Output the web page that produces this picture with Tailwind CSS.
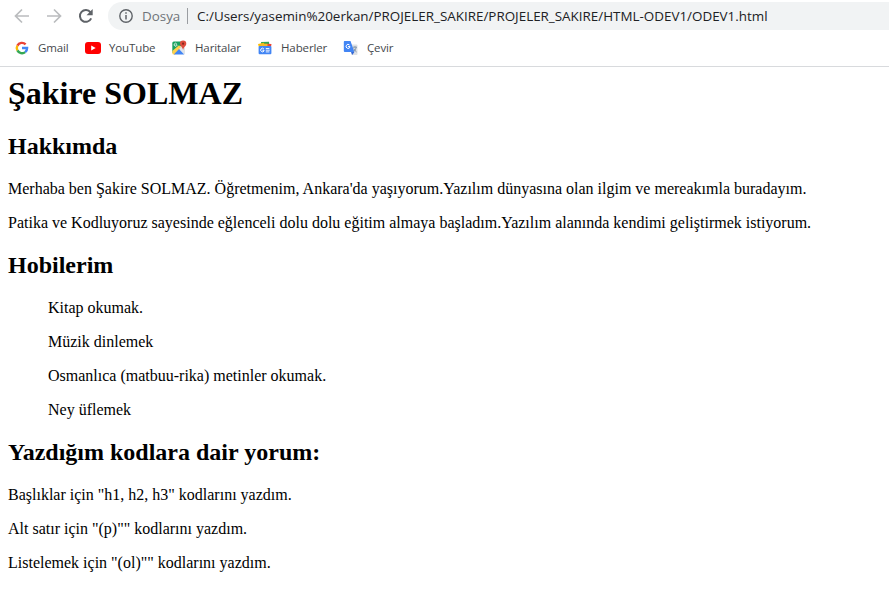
<!DOCTYPE html>
<html lang="tr">
<head>
<meta charset="utf-8">
<title>ODEV1</title>
<script src="https://cdn.jsdelivr.net/npm/@tailwindcss/browser@4"></script>
</head>
<body class="bg-white text-black h-[605px] overflow-hidden">
<header class="h-[67px] border-b border-[#d8dadd] font-['Open_Sans',sans-serif]">
  <nav class="flex h-[30px] pt-[2px]">
    <div class="flex w-[108px] shrink-0 items-center pl-[14px] gap-[16px]">
      <svg class="w-4 h-4 shrink-0" viewBox="0 0 16 16" fill="none" stroke="#babcbe" stroke-width="1.7"><path d="M15 8H2M8 1.5L1.5 8 8 14.5"/></svg>
      <svg class="w-4 h-4 shrink-0" viewBox="0 0 16 16" fill="none" stroke="#babcbe" stroke-width="1.7"><path d="M1 8h13M8 1.5L14.5 8 8 14.5"/></svg>
      <svg class="w-4 h-4 shrink-0" viewBox="0 0 16 16"><path d="M13.2 10.4A5.9 5.9 0 1 1 12.5 4.3" fill="none" stroke="#5f6368" stroke-width="2"/><path d="M14.7 1v6.2H8.5z" fill="#5f6368"/></svg>
    </div>
    <div class="flex flex-1 h-7 items-center rounded-l-full bg-[#f1f3f4] pl-[11px] whitespace-nowrap">
      <svg class="w-[14px] h-[14px] shrink-0" viewBox="0 0 14 14" fill="none" stroke="#5f6368"><circle cx="7" cy="7" r="6.2" stroke-width="1.4"/><path d="M7 6v4.5M7 3.3v1.5" stroke-width="1.5"/></svg>
      <span class="ml-[9px] w-[45px] text-[13.4px] leading-5 text-[#6f7378]">Dosya</span>
      <span class="w-px h-4 bg-[#9a9da1]"></span>
      <span class="ml-[9px] text-[13.42px] leading-5 text-[#202124]">C:/Users/yasemin%20erkan/PROJELER_SAKIRE/PROJELER_SAKIRE/HTML-ODEV1/ODEV1.html</span>
    </div>
  </nav>
  <div class="flex h-9 items-center pl-[14px] text-[11.5px] tracking-[-0.12px] leading-4 text-[#45484c] whitespace-nowrap">
    <a class="flex items-center w-[70px]">
      <svg class="w-4 h-4 mr-2 shrink-0" viewBox="0 0 16 16" fill="none" stroke-width="2.4"><path d="M3.4 5.6A5.1 5.1 0 0 1 11.6 4.4" stroke="#ea4335"/><path d="M3.4 5.6a5.1 5.1 0 0 0 0 4.8" stroke="#fbbc05"/><path d="M3.4 10.4a5.1 5.1 0 0 0 7.8 1.7" stroke="#34a853"/><path d="M8 8h5.1a5.1 5.1 0 0 1-1.9 4.1" stroke="#4285f4"/></svg>
      <span>Gmail</span>
    </a>
    <a class="flex items-center w-[87px]">
      <svg class="w-[17px] h-4 mr-2 shrink-0" viewBox="0 0 17 16"><rect x="1" y="2" width="16" height="12" rx="3" fill="#f00"/><path d="M7.2 5.4v5.2L11.7 8z" fill="#fff"/></svg>
      <span>YouTube</span>
    </a>
    <a class="flex items-center w-[86px]">
      <svg class="w-4 h-4 mr-2 shrink-0" viewBox="0 0 16 16"><path d="M1.3 3q0-1.5 1.5-1.5H11V5l-9.7 8z" fill="#18a15f"/><path d="M1.3 11L8 5.2 11 8l-7 6.5H2.8q-1.5 0-1.5-1.5z" fill="#ffd04b"/><path d="M8 9l3.3-3.5L14 8v5.5q0 1-1 1z" fill="#e0e4e8"/><path d="M2.8 14.5L8 9l5.2 5.5z" fill="#4285f4"/><path d="M5.6 3.6A1.5 1.5 0 1 0 6 5.3v-.5H4.7" fill="none" stroke="#fff" stroke-width=".8"/><path d="M12.1.5a3.2 3.2 0 0 0-3.2 3.2c0 2.3 2.6 3.2 3.2 6.2.6-3 3.2-3.9 3.2-6.2A3.2 3.2 0 0 0 12.1.5z" fill="#de4b3c"/><circle cx="12.1" cy="3.7" r="1.1" fill="#85251b"/></svg>
      <span>Haritalar</span>
    </a>
    <a class="flex items-center w-[86px]">
      <svg class="w-4 h-4 mr-2 shrink-0" viewBox="0 0 16 16"><path d="M4 2l8-.3.5 5h-8z" fill="#34a853"/><path d="M1 4l6-1.2 1 4H1.8z" fill="#fbbc05"/><path d="M8 3.8l6.5.2-.7 4H8z" fill="#ea4335"/><path d="M3.5 3.8h7v3h-7z" fill="#f2b928"/><rect x="1.6" y="6" width="12.8" height="8.3" rx="1" fill="#4285f4"/><path d="M6.8 8.8A1.8 1.8 0 1 0 7 11v-.8H5.4" fill="none" stroke="#fff" stroke-width="1"/><path d="M8.8 8.5h3.6M8.8 10.2h4M8.8 11.9h3.6" stroke="#fff" stroke-width=".9"/></svg>
      <span>Haberler</span>
    </a>
    <a class="flex items-center">
      <svg class="w-4 h-4 mr-2 shrink-0" viewBox="0 0 16 16"><path d="M7 4.5h6.5q1 0 1 1V14q0 1-1 1H8.5z" fill="#dfe1e4"/><path d="M8 12h3.4l-2.2 3z" fill="#3367d6"/><path d="M1.5 1h6l3.9 11H1.8Q.8 12 .8 11V2q0-1 .7-1z" fill="#4285f4"/><path d="M6.5 5A2 2 0 1 0 7 7v-.4H5" fill="none" stroke="#fff" stroke-width="1"/><path d="M10 7.2h4M12 6.2v1M13.2 7.5q-.6 2.5-2.4 4M10.8 8.5q1 2.3 2.8 3.5" fill="none" stroke="#7c8fa3" stroke-width=".9"/></svg>
      <span>Çevir</span>
    </a>
  </div>
</header>
<main class="pt-2 px-2 text-[16px] leading-[18px] font-['Liberation_Serif',serif]">
  <h1 class="text-[32px] leading-[37px] font-bold mb-[21px]">Şakire SOLMAZ</h1>
  <h2 class="text-[24px] leading-[27px] font-bold mb-5">Hakkımda</h2>
  <p class="mb-4">Merhaba ben Şakire SOLMAZ. Öğretmenim, Ankara'da yaşıyorum.Yazılım dünyasına olan ilgim ve mereakımla buradayım.</p>
  <p class="mb-5">Patika ve Kodluyoruz sayesinde eğlenceli dolu dolu eğitim almaya başladım.Yazılım alanında kendimi geliştirmek istiyorum.</p>
  <h2 class="text-[24px] leading-[27px] font-bold mb-5">Hobilerim</h2>
  <ul class="pl-10 flex flex-col gap-4 mb-5">
    <li>Kitap okumak.</li>
    <li>Müzik dinlemek</li>
    <li>Osmanlıca (matbuu-rika) metinler okumak.</li>
    <li>Ney üflemek</li>
  </ul>
  <h2 class="text-[24px] leading-[27px] font-bold mb-5">Yazdığım kodlara dair yorum:</h2>
  <p class="mb-4">Başlıklar için "h1, h2, h3" kodlarını yazdım.</p>
  <p class="mb-4">Alt satır için "(p)"" kodlarını yazdım.</p>
  <p>Listelemek için "(ol)"" kodlarını yazdım.</p>
</main>
</body>
</html>
